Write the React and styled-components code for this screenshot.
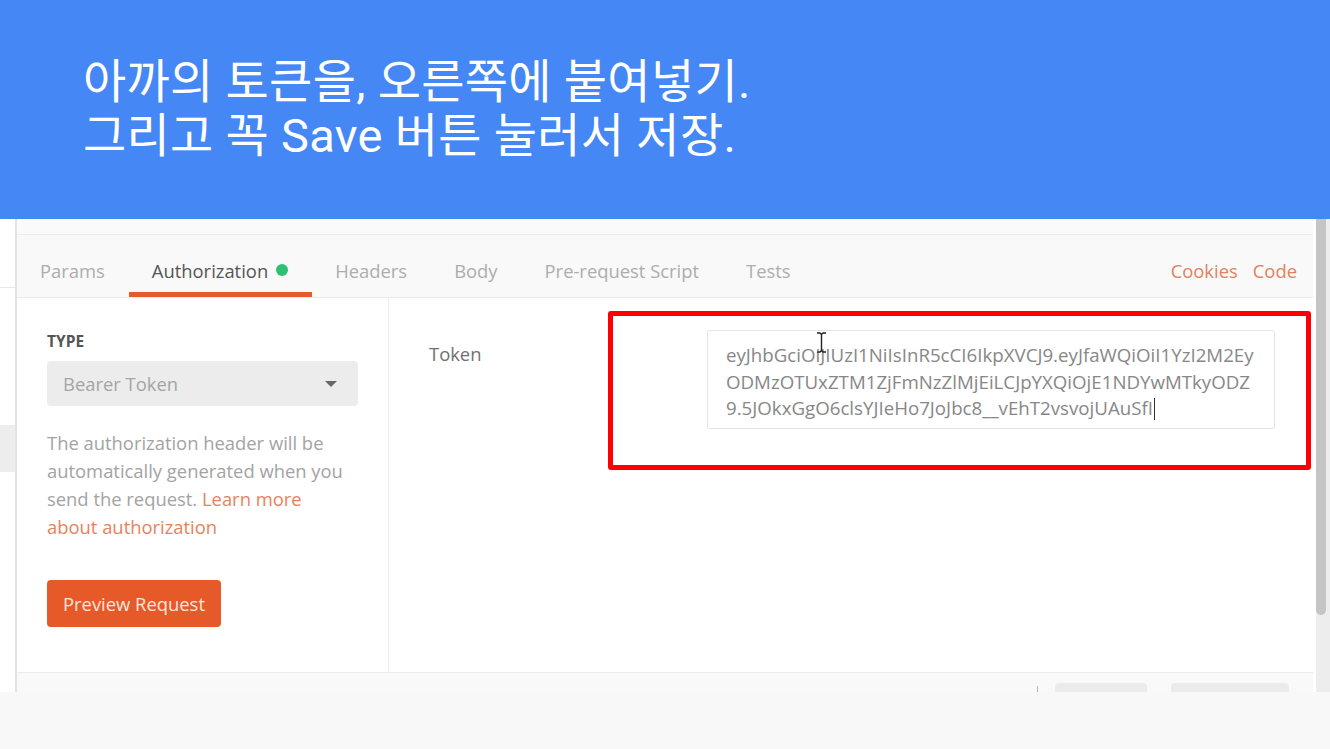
import styled, { createGlobalStyle } from "styled-components";

const GlobalStyle = createGlobalStyle`
  html, body {
    margin: 0;
    padding: 0;
    background: #f8f8f8;
  }
  body {
    font-family: "Open Sans", "Noto Sans CJK KR", sans-serif;
  }
`;

const Page = styled.div`
  display: flex;
  flex-direction: column;
  width: 1330px;
  height: 749px;
  overflow: hidden;
  background: #f8f8f8;
`;

const Banner = styled.header`
  height: 219px;
  flex-shrink: 0;
  box-sizing: border-box;
  padding: 55px 0 0 83px;
  background: #4487f5;
  color: #ffffff;
  font-family: Roboto, "Noto Sans CJK KR", sans-serif;
  font-size: 47px;
  line-height: 54px;
  letter-spacing: 0.3px;
`;

const BannerLine = styled.div`
  white-space: nowrap;
`;

const Shot = styled.section`
  position: relative;
  display: flex;
  height: 473px;
  flex-shrink: 0;
  background: #ffffff;
`;

const SideStrip = styled.div`
  width: 15px;
  border-right: 2px solid #e3e3e3;
  display: flex;
  flex-direction: column;
`;

const StripTop = styled.div`
  height: 68px;
  border-bottom: 1px solid #e6e6e6;
`;

const StripBlock = styled.div`
  margin-top: 137px;
  height: 47px;
  background: #ededed;
`;

const Panel = styled.div`
  width: 1296px;
  display: flex;
  flex-direction: column;
`;

const PanelTop = styled.div`
  height: 15px;
  background: #fafafa;
  border-bottom: 1px solid #ebebeb;
`;

const TabBar = styled.nav`
  height: 62px;
  display: flex;
  align-items: stretch;
  background: #f9f9f9;
  border-bottom: 1px solid #ebebeb;
  font-size: 18.4px;
`;

const Tab = styled.div`
  position: relative;
  display: flex;
  align-items: center;
  gap: 8px;
  padding: 8px 24px 0 23px;
  color: ${(p) => (p.$active ? "#555555" : "#adadad")};
  white-space: nowrap;

  &::after {
    content: "";
    display: ${(p) => (p.$active ? "block" : "none")};
    position: absolute;
    left: 0;
    right: 0;
    bottom: 0;
    height: 5px;
    background: #e35c2b;
  }
`;

const Dot = styled.span`
  width: 12px;
  height: 12px;
  border-radius: 50%;
  background: #30c074;
`;

const TabLinks = styled.div`
  margin-left: auto;
  display: flex;
  align-items: center;
  gap: 15px;
  padding: 8px 16px 0 0;
  color: #e3805d;
`;

const Content = styled.div`
  height: 374px;
  display: flex;
  background: #ffffff;
`;

const AuthSide = styled.div`
  width: 372px;
  box-sizing: border-box;
  padding: 34px 30px 0;
  border-right: 1px solid #ececec;
`;

const TypeLabel = styled.div`
  font-size: 15.5px;
  line-height: 18px;
  font-weight: 700;
  color: #555555;
`;

const Select = styled.div`
  margin-top: 11px;
  width: 311px;
  height: 45px;
  box-sizing: border-box;
  display: flex;
  align-items: center;
  justify-content: space-between;
  padding: 0 21px 0 16px;
  background: #ececec;
  border-radius: 4px;
  font-size: 18.4px;
  color: #a5a5a5;
`;

const Caret = styled.span`
  width: 0;
  height: 0;
  border-left: 6px solid transparent;
  border-right: 6px solid transparent;
  border-top: 6px solid #666666;
`;

const Help = styled.p`
  margin: 23px 0 0;
  max-width: 305px;
  font-size: 18.4px;
  line-height: 28px;
  color: #a3a3a3;
`;

const Link = styled.span`
  color: #e8825c;
`;

const PreviewButton = styled.button`
  margin-top: 39px;
  height: 47px;
  padding: 0 16px;
  border: none;
  border-radius: 4px;
  background: #e65a29;
  color: #fde6dc;
  font-family: "Open Sans", sans-serif;
  font-size: 18.4px;
`;

const TokenSide = styled.div`
  flex: 1;
  display: flex;
  padding: 32px 0 0 40px;
`;

const FieldLabel = styled.div`
  width: 278px;
  padding-top: 10px;
  font-size: 18.4px;
  line-height: 28px;
  color: #707070;
`;

const TokenBox = styled.div`
  width: 568px;
  height: 99px;
  box-sizing: border-box;
  padding: 11px 17px 0 18px;
  border: 1px solid #e4e4e4;
  border-radius: 3px;
  font-size: 18.7px;
  line-height: 26.5px;
  color: #878787;
  white-space: nowrap;
`;

const TextCaret = styled.span`
  display: inline-block;
  width: 1px;
  height: 22px;
  margin-left: 1px;
  vertical-align: -5px;
  background: #333333;
`;

const Footer = styled.div`
  height: 9px;
  padding: 10px 24px 0 0;
  border-top: 1px solid #ebebeb;
  background: #f9f9f9;
  overflow: hidden;
  display: flex;
  justify-content: flex-end;
  align-items: flex-start;
`;

const FooterTick = styled.span`
  width: 1px;
  height: 6px;
  margin: 3px 17px 0 0;
  background: #b5b5b5;
`;

const GhostButton = styled.span`
  width: ${(p) => p.$w}px;
  height: 30px;
  margin-left: ${(p) => p.$gap || 0}px;
  border-radius: 4px;
  background: #ebebeb;
`;

const Gutter = styled.div`
  width: 3px;
  background: #ffffff;
`;

const ScrollTrack = styled.div`
  width: 14px;
  background: #ededed;
`;

const ScrollThumb = styled.div`
  width: 10px;
  height: 396px;
  border-radius: 0 0 5px 5px;
  background: #c5c5c5;
`;

const Highlight = styled.div`
  position: absolute;
  left: 608px;
  top: 92px;
  width: 703px;
  height: 159px;
  box-sizing: border-box;
  border: 5px solid #ff0000;
  border-radius: 3px;
  pointer-events: none;
`;

const IBeam = styled.svg`
  position: absolute;
  left: 816px;
  top: 113px;
`;

const tabs = ["Params", "Authorization", "Headers", "Body", "Pre-request Script", "Tests"];

export default function App() {
  return (
    <Page>
      <GlobalStyle />
      <Banner>
        <BannerLine>아까의 토큰을, 오른쪽에 붙여넣기.</BannerLine>
        <BannerLine>그리고 꼭 Save 버튼 눌러서 저장.</BannerLine>
      </Banner>
      <Shot>
        <SideStrip>
          <StripTop />
          <StripBlock />
        </SideStrip>
        <Panel>
          <PanelTop />
          <TabBar>
            {tabs.map((t) => (
              <Tab key={t} $active={t === "Authorization"}>
                {t}
                {t === "Authorization" && <Dot />}
              </Tab>
            ))}
            <TabLinks>
              <span>Cookies</span>
              <span>Code</span>
            </TabLinks>
          </TabBar>
          <Content>
            <AuthSide>
              <TypeLabel>TYPE</TypeLabel>
              <Select>
                Bearer Token
                <Caret />
              </Select>
              <Help>
                The authorization header will be automatically generated when you
                send the request. <Link>Learn more about authorization</Link>
              </Help>
              <PreviewButton>Preview Request</PreviewButton>
            </AuthSide>
            <TokenSide>
              <FieldLabel>Token</FieldLabel>
              <TokenBox>
                <div>eyJhbGciOiJIUzI1NiIsInR5cCI6IkpXVCJ9.eyJfaWQiOiI1YzI2M2Ey</div>
                <div>ODMzOTUxZTM1ZjFmNzZlMjEiLCJpYXQiOjE1NDYwMTkyODZ</div>
                <div>
                  9.5JOkxGgO6clsYJIeHo7JoJbc8__vEhT2vsvojUAuSfI
                  <TextCaret />
                </div>
              </TokenBox>
            </TokenSide>
          </Content>
          <Footer>
            <FooterTick />
            <GhostButton $w={92} />
            <GhostButton $w={118} $gap={24} />
          </Footer>
        </Panel>
        <Gutter />
        <ScrollTrack>
          <ScrollThumb />
        </ScrollTrack>
        <Highlight />
        <IBeam width="11" height="21" viewBox="0 0 11 21">
          <path d="M1 1h3l1.5 1.5L7 1h3M5.5 2.5v16M1 20h3l1.5-1.5L7 20h3" fill="none" stroke="#222" strokeWidth="1.4" />
        </IBeam>
      </Shot>
    </Page>
  );
}
